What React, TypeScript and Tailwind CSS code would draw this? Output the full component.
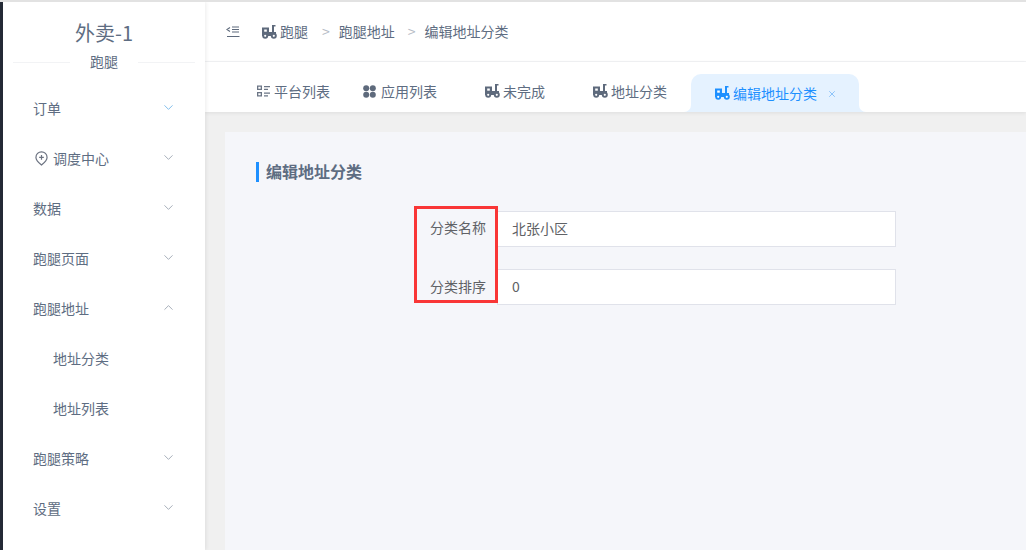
import React from 'react';
import { ChevronDown, ChevronUp, X } from 'lucide-react';

const font = '[font-family:"Noto_Sans_CJK_SC","Liberation_Sans",sans-serif]';

const Scooter: React.FC<{ className?: string }> = ({ className }) => (
  <svg viewBox="0 0 15 14" className={className}>
    <rect x="0" y="2.500" width="7" height="8.500" fill="currentColor" />
    <rect x="2.200" y="4.500" width="2.600" height="2.200" fill="white" />
    <rect x="7" y="7" width="7" height="4" fill="currentColor" />
    <rect x="10" y="1" width="2" height="7" fill="currentColor" />
    <rect x="10" y="0" width="3.500" height="1.500" fill="currentColor" />
    <circle cx="3.200" cy="10.800" r="3" fill="currentColor" />
    <circle cx="11.800" cy="10.800" r="3" fill="currentColor" />
    <circle cx="3.200" cy="10.800" r="1.100" fill="white" />
    <circle cx="11.800" cy="10.800" r="1.100" fill="white" />
  </svg>
);

const MenuItem: React.FC<{ label: string; open?: boolean; child?: boolean; leaf?: boolean; pin?: boolean; blue?: boolean }> = ({ label, open, child, leaf, pin, blue }) => (
  <div className={`flex h-[50px] items-center justify-between pb-[2px] pr-[29px] text-[14px] text-[#5e6d82] ${child ? 'pl-[50px]' : 'pl-[30px]'}`}>
    <span className="flex items-center gap-[5px]">
      {pin && (
        <svg viewBox="0 0 14 16" className="ml-[2px] h-[15px] w-[13px]" fill="none" stroke="#6b7280" strokeWidth="1.300">
          <path d="M7 15C4 12.500 1 10 1 6.800a6 6 0 0 1 12 0C13 10 10 12.500 7 15z" />
          <path d="M7 4.300v5M4.500 6.800h5" />
        </svg>
      )}
      {label}
    </span>
    {!leaf && (
      <span className="-mt-[2px]">
        {open ? (
          <ChevronUp size={15} strokeWidth={1.2} className="text-[#8a94a3]" />
        ) : (
          <ChevronDown size={15} strokeWidth={1.2} className={blue ? 'text-[#5aa9e6]' : 'text-[#8a94a3]'} />
        )}
      </span>
    )}
  </div>
);

const Field: React.FC<{ label: string; value: string; labelPad: string }> = ({ label, value, labelPad }) => (
  <div className="flex items-center">
    <label className={`w-[72px] pr-[11px] text-right text-[14px] whitespace-nowrap text-[#606266] ${labelPad}`}>{label}</label>
    <div className="flex h-[36px] w-[399px] items-center border border-[#e0e2ea] bg-white pb-[2px] pl-[14px] text-[14px] text-[#606266]">
      {value}
    </div>
  </div>
);

const Tab: React.FC<{ label: string; icon: React.ReactNode; width: string }> = ({ label, icon, width }) => (
  <div className={`flex items-center gap-[3px] text-[14px] text-[#5e6d82] ${width}`}>
    {icon}
    {label}
  </div>
);

const ListIcon = () => (
  <svg viewBox="0 0 13 12" className="mr-[1px] h-[12px] w-[13px]" fill="#6b7585">
    <path d="M0 .500h5v4.500H0zM1.300 1.800v1.900h2.400V1.800zM0 7h5v4.500H0zM1.300 8.300v1.900h2.400V8.300z" fillRule="evenodd" />
    <path d="M7 1h6v1.300H7zM7 3.700h4v1.300H7zM7 7.500h6v1.300H7zM7 10.200h4v1.300H7z" />
  </svg>
);

const AppsIcon = () => (
  <svg viewBox="0 0 13 13" className="mr-[2px] h-[13px] w-[13px]" fill="#5e6a7c">
    <circle cx="3.200" cy="3.200" r="3" />
    <circle cx="9.800" cy="3.200" r="3" />
    <circle cx="3.200" cy="9.800" r="3" />
    <circle cx="9.800" cy="9.800" r="3" />
  </svg>
);

const scooterGray = <Scooter className="h-[14px] w-[15px] text-[#5e6a7c]" />;

export default function App() {
  return (
    <div className={`flex h-[550px] w-[1026px] overflow-hidden border-t-2 border-[#e2e2e2] bg-[#f0f0f0] ${font}`}>
      <div className="w-[3px] shrink-0 bg-[#242a36]" />

      <aside className="z-10 w-[202px] shrink-0 bg-white shadow-[1px_0_4px_rgba(0,0,0,0.08)]">
        <div className="flex h-[82px] flex-col items-center">
          <div className="mt-[16px] h-[30px] text-[20px] leading-[30px] text-[#5e6d82]">外卖-1</div>
          <div className="relative mt-[14px] flex w-[182px] justify-center border-t border-[#f2f3f5]">
            <span className="-mt-[12px] bg-white px-[20px] text-[14px] leading-[20px] text-[#5e6d82]">跑腿</span>
          </div>
        </div>
        <MenuItem label="订单" blue />
        <MenuItem label="调度中心" pin />
        <MenuItem label="数据" />
        <MenuItem label="跑腿页面" />
        <MenuItem label="跑腿地址" open />
        <MenuItem label="地址分类" child leaf />
        <MenuItem label="地址列表" child leaf />
        <MenuItem label="跑腿策略" />
        <MenuItem label="设置" />
      </aside>

      <main className="flex min-w-0 flex-1 flex-col">
        <header className="flex h-[60px] shrink-0 items-center border-b border-[#f2f3f5] bg-white pl-[21px] text-[14px] text-[#5e6d82]">
          <svg viewBox="0 0 14 12" className="h-[12px] w-[14px]" fill="none" stroke="#5e6a7c" strokeWidth="1.100">
            <path d="M4 1.500 1 3.500l3 2M6 1h7M6 3.500h7M6 6h7M1 10.500h12.500" />
          </svg>
          <span className="ml-[22px] flex items-center gap-[3px]">
            {scooterGray}
            跑腿
          </span>
          <span className="ml-[14px] mr-[9px] text-[#b4bac4]">&gt;</span>
          <span>跑腿地址</span>
          <span className="ml-[13px] mr-[9px] text-[#b4bac4]">&gt;</span>
          <span>编辑地址分类</span>
        </header>

        <nav className="flex h-[50px] shrink-0 items-center bg-white pl-[52px] pt-[8px] shadow-[0_1px_4px_rgba(0,0,0,0.08)]">
          <Tab label="平台列表" icon={<ListIcon />} width="w-[106px]" />
          <Tab label="应用列表" icon={<AppsIcon />} width="w-[122px]" />
          <Tab label="未完成" icon={scooterGray} width="w-[108px]" />
          <Tab label="地址分类" icon={scooterGray} width="w-[98px]" />
          <div className="relative flex h-[38px] w-[168px] translate-y-[2px] items-center gap-[3px] rounded-t-[10px] bg-[#e5f2ff] pl-[24px] text-[14px] text-[#1e90ff]">
            <span className="absolute bottom-0 left-[-7px] h-[7px] w-[7px] bg-[#e5f2ff]">
              <span className="block h-full w-full rounded-br-[7px] bg-white" />
            </span>
            <span className="absolute bottom-0 right-[-7px] h-[7px] w-[7px] bg-[#e5f2ff]">
              <span className="block h-full w-full rounded-bl-[7px] bg-white" />
            </span>
            <Scooter className="h-[14px] w-[15px] text-[#1e90ff]" />
            编辑地址分类
            <X size={10} strokeWidth={1.5} className="ml-[7px] mt-[2px] text-[#5aa9f5]" />
          </div>
        </nav>

        <section className="relative ml-[20px] mt-[20px] flex-1 bg-[#f5f6fa] pl-[31px] pt-[30px]">
          <h2 className="flex h-[20px] items-center border-l-[3px] border-[#1e90ff] pb-[2px] pl-[7px] text-[16px] font-bold text-[#5e6d82]">
            编辑地址分类
          </h2>
          <div className="ml-[169px] mt-[29px] flex flex-col gap-[22px]">
            <Field label="分类名称" value="北张小区" labelPad="pb-[3px]" />
            <Field label="分类排序" value="0" labelPad="pb-[1px]" />
          </div>
          <div className="absolute left-[189px] top-[74px] h-[97px] w-[84px] border-[3px] border-[#f93636]" />
        </section>
      </main>
    </div>
  );
}
